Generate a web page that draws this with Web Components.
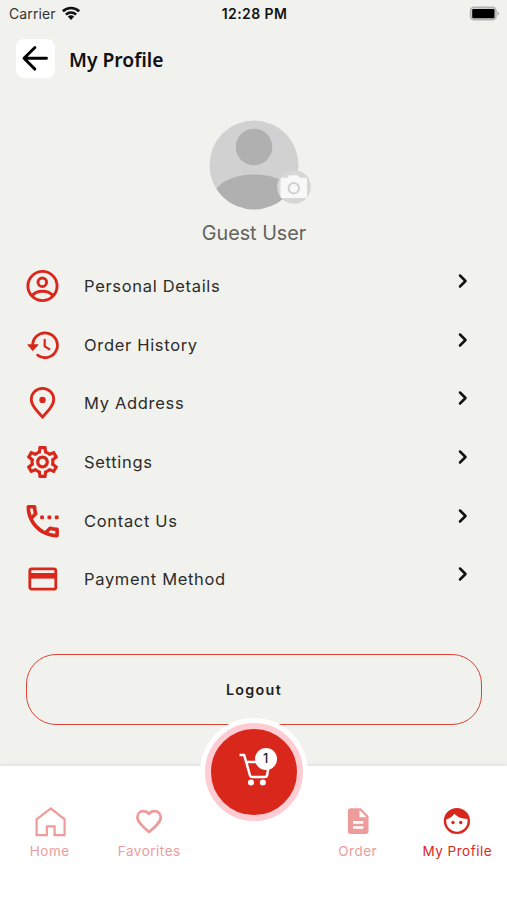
<!DOCTYPE html>
<html lang="en">
<head>
<meta charset="utf-8">
<title>My Profile</title>
<style>
  html, body { margin: 0; padding: 0; }
  body { background: #f1f2ed; font-family: Inter, "Liberation Sans", sans-serif; }
</style>
</head>
<body>
<profile-screen></profile-screen>

<script>
// Menu icons share one 40x40 box
const ICONS = {
  person: `<g fill="none" stroke="currentColor" stroke-width="2.9">
    <circle cx="20.5" cy="20" r="14.6"/><circle cx="20.3" cy="16.3" r="4.3"/>
    <path d="M9.6 30C15 23.6 26 23.6 31.4 30"/></g>`,
  history: `<g fill="none" stroke="currentColor" stroke-width="2.8" stroke-linecap="round" stroke-linejoin="round">
    <path d="M10.7 21.5A12.4 12.4 0 1 1 15.6 30.2"/><path d="M22.7 14.8V21.4L27.4 24.2" stroke-width="2.2"/></g>
    <path d="M5.8 19.8H16L10.8 25.6z" fill="currentColor" stroke="currentColor" stroke-linejoin="round"/>`,
  pin: `<path d="M20.5 34C14 27 9.3 21.8 9.3 16.5a11.2 11.2 0 0 1 22.4 0C31.7 21.8 27 27 20.5 34z" fill="none" stroke="currentColor" stroke-width="2.8"/>
    <circle cx="20.5" cy="16.9" r="3.2" fill="currentColor"/>`,
  gear: `<path transform="translate(1.3 .8) scale(1.6)" fill="currentColor" d="M19.43 12.98c.04-.32.07-.64.07-.98s-.03-.66-.07-.98l2.11-1.65c.19-.15.24-.42.12-.64l-2-3.46c-.09-.16-.26-.25-.44-.25-.06 0-.12.01-.17.03l-2.49 1c-.52-.4-1.08-.73-1.69-.98l-.38-2.65C14.46 2.18 14.25 2 14 2h-4c-.25 0-.46.18-.49.42l-.38 2.65c-.61.25-1.17.59-1.69.98l-2.49-1c-.06-.02-.12-.03-.18-.03-.17 0-.34.09-.43.25l-2 3.46c-.13.22-.07.49.12.64l2.11 1.65c-.04.32-.07.65-.07.98s.03.66.07.98l-2.11 1.65c-.19.15-.24.42-.12.64l2 3.46c.09.16.26.25.44.25.06 0 .12-.01.17-.03l2.49-1c.52.4 1.08.73 1.69.98l.38 2.65c.03.24.24.42.49.42h4c.25 0 .46-.18.49-.42l.38-2.65c.61-.25 1.17-.59 1.69-.98l2.49 1c.06.02.12.03.18.03.17 0 .34-.09.43-.25l2-3.46c.12-.22.07-.49-.12-.64l-2.11-1.65zm-1.98-1.71c.04.31.05.52.05.73 0 .21-.02.43-.05.73l-.14 1.13.89.7 1.08.84-.7 1.21-1.27-.51-1.04-.42-.9.68c-.43.32-.84.56-1.25.73l-1.06.43-.16 1.13-.2 1.35h-1.4l-.19-1.35-.16-1.13-1.06-.43c-.43-.18-.83-.41-1.23-.71l-.91-.7-1.06.43-1.27.51-.7-1.21 1.08-.84.89-.7-.14-1.13c-.03-.31-.05-.54-.05-.74s.02-.43.05-.73l.14-1.13-.89-.7-1.08-.84.7-1.21 1.27.51 1.04.42.9-.68c.43-.32.84-.56 1.25-.73l1.06-.43.16-1.13.2-1.35h1.39l.19 1.35.16 1.13 1.06.43c.43.18.83.41 1.23.71l.91.7 1.06-.43 1.27-.51.7 1.21-1.07.85-.89.7.14 1.13zM12 8c-2.21 0-4 1.79-4 4s1.79 4 4 4 4-1.79 4-4-1.79-4-4-4zm0 6c-1.1 0-2-.9-2-2s.9-2 2-2 2 .9 2 2-.9 2-2 2z"/>`,
  phone: `<path transform="translate(-.9 -1.4) scale(1.8)" fill="currentColor" d="M20 15.5c-1.2 0-2.5-.2-3.6-.6h-.3c-.3 0-.5.1-.7.3l-2.2 2.2c-2.8-1.5-5.2-3.8-6.6-6.6l2.2-2.2c.3-.3.4-.7.2-1-.3-1.1-.5-2.4-.5-3.6 0-.5-.5-1-1-1H4c-.5 0-1 .5-1 1 0 9.4 7.6 17 17 17 .5 0 1-.5 1-1v-3.5c0-.5-.5-1-1-1M5 5h1.5c.1.9.3 1.8.5 2.6L5.8 8.8C5.4 7.6 5.1 6.3 5 5m14 14c-1.3-.1-2.6-.4-3.8-.8l1.2-1.2c.8.2 1.7.4 2.6.4V19"/>
    <g fill="currentColor"><rect x="18.2" y="14.5" width="3.8" height="3.8" rx="1"/><rect x="25.5" y="14.5" width="3.8" height="3.8" rx="1"/><rect x="32.8" y="14.5" width="3.8" height="3.8" rx="1"/></g>`,
  card: `<rect x="7.8" y="9.8" width="26" height="20.4" rx="2" fill="none" stroke="currentColor" stroke-width="2.8"/>
    <path d="M7 14h27.5v5.6H7z" fill="currentColor"/>`,
  home: `<path d="M6.6 34.2V18.4L20.8 7.3L34.6 18.4V34.2H24.6V25.3H16.8V34.2z" fill="none" stroke="currentColor" stroke-width="2.2"/>`,
  heart: `<path d="M20 31C13 25 8.4 20.6 8.4 16.2C8.4 12.8 11 10.2 14.3 10.2C16.6 10.2 18.6 11.3 20 13C21.4 11.3 23.4 10.2 25.7 10.2C29 10.2 31.8 12.8 31.8 16.2C31.8 20.6 27 25 20 31z" fill="none" stroke="currentColor" stroke-width="2.7" stroke-linejoin="round"/>`,
  order: `<path transform="translate(4.7 4.6) scale(1.29)" fill="currentColor" d="M14 2H6c-1.1 0-1.99.9-1.99 2L4 20c0 1.1.89 2 1.99 2H18c1.1 0 2-.9 2-2V8l-6-6zm2 16H8v-2h8v2zm0-4H8v-2h8v2zm-3-5V3.5L18.5 9H13z"/>`,
  face: `<circle cx="19.9" cy="20" r="11.9" fill="none" stroke="currentColor" stroke-width="2.4"/>
    <path d="M8 18.8C8 11.5 13.5 8 19.9 8C27 8 31.5 12.5 31.5 18C25 18.3 20.3 15.8 17.3 12.8C15.5 15.8 12.5 17.9 8 18.8z" fill="currentColor"/>
    <circle cx="16" cy="21.5" r="1.7" fill="currentColor"/><circle cx="23.7" cy="21.5" r="1.7" fill="currentColor"/>`
};

const icon = (name) => `<svg width="40" height="40" viewBox="0 0 40 40" aria-hidden="true">${ICONS[name] || ''}</svg>`;

class StatusBar extends HTMLElement {
  constructor() {
    super();
    this.attachShadow({ mode: 'open' }).innerHTML = `
      <style>
        :host {
          display: grid;
          grid-template-columns: 1fr auto 1fr;
          align-items: center;
          height: 27px;
          padding: 0 7px 0 9px;
          color: #111;
          font-size: 14px;
        }
        .left { display: flex; align-items: center; gap: 6px; color: #333; letter-spacing: .1px; }
        .time { font-weight: 600; letter-spacing: .4px; }
        .battery { justify-self: end; }
        svg { display: block; }
      </style>
      <div class="left"><span>Carrier</span>
        <svg width="18" height="15" viewBox="0 0 18 15">
          <g fill="none" stroke="#111" stroke-width="2.6">
            <path d="M.9 5.3C5.4 .8 12.6 .8 17.1 5.3"/><path d="M3.9 8.6C6.7 5.8 11.3 5.8 14.1 8.6"/>
          </g>
          <path d="M5.8 10.5Q9 7.9 12.2 10.5L9 14z" fill="#111"/>
        </svg>
      </div>
      <span class="time"><slot></slot></span>
      <svg class="battery" width="31" height="16" viewBox="0 0 31 16">
        <rect x="1.5" y="1.2" width="25.5" height="12.6" rx="3.5" fill="#d0d1cd" stroke="#b2b3af" stroke-width="1.5"/>
        <rect x="3.2" y="2.9" width="22.3" height="9.4" rx="1.3" fill="#000"/>
        <path d="M28.5 5.3Q31.5 7.5 28.5 9.8z" fill="#aaaba7"/>
      </svg>`;
  }
}
customElements.define('status-bar', StatusBar);

class PageHeader extends HTMLElement {
  constructor() {
    super();
    this.attachShadow({ mode: 'open' }).innerHTML = `
      <style>
        :host { display: flex; align-items: center; gap: 14px; padding: 12px 16px 0; }
        button { display: block; width: 39px; height: 39px; padding: 0; border: 0; border-radius: 8px; background: #fff; }
        svg { display: block; }
        h1 { margin: 2px 0 0; font: 600 19.3px/28px "Noto Sans", sans-serif; color: #111; }
      </style>
      <button aria-label="Back">
        <svg width="39" height="39" viewBox="0 0 39 39" fill="none" stroke="#000" stroke-width="2.9" stroke-linecap="round" stroke-linejoin="round">
          <path d="M30.5 19.3H8.3M18.9 8.5L8 19.3L18.9 30.1"/>
        </svg>
      </button>
      <h1><slot></slot></h1>`;
  }
}
customElements.define('page-header', PageHeader);

class UserAvatar extends HTMLElement {
  constructor() {
    super();
    this.attachShadow({ mode: 'open' }).innerHTML = `
      <style>
        :host { display: flex; flex-direction: column; align-items: center; padding-top: 42px; }
        .photo { position: relative; width: 90px; height: 90px; }
        svg { display: block; }
        .camera { position: absolute; left: 68.5px; top: 50px; }
        .name { margin: 9px 0 0 1px; font-size: 19.8px; line-height: 28px; color: #62625f; }
      </style>
      <div class="photo">
        <svg width="90" height="90" viewBox="0 0 90 90">
          <clipPath id="round"><circle cx="45" cy="45" r="44.5"/></clipPath>
          <g clip-path="url(#round)">
            <rect width="90" height="90" fill="#d1d1d1"/>
            <circle cx="45" cy="27" r="18.3" fill="#b0b0b0"/>
            <path d="M6 71C18 49 72 49 84 71L80 90H10z" fill="#b0b0b0"/>
          </g>
        </svg>
        <svg class="camera" width="35" height="35" viewBox="0 0 35 35">
          <circle cx="17" cy="17" r="16.8" fill="#d7d7d5"/>
          <path d="M5 7.8H10.5L12 5.3H21L22.5 7.8H28.5Q30 7.8 30 9.3V26.5Q30 28 28.5 28H5Q3.5 28 3.500 26.5V9.3Q3.5 7.8 5 7.8z" fill="#f8f8f8"/>
          <circle cx="16.8" cy="18.2" r="5.2" fill="none" stroke="#d0d0d0" stroke-width="2"/>
        </svg>
      </div>
      <div class="name"><slot></slot></div>`;
  }
}
customElements.define('user-avatar', UserAvatar);

class MenuRow extends HTMLElement {
  connectedCallback() {
    this.attachShadow({ mode: 'open' }).innerHTML = `
      <style>
        :host { display: flex; align-items: center; height: 58.6px; padding: 0 36px 0 22px; color: #2c2c2a; }
        svg { display: block; flex: none; color: #d9271c; }
        .label { flex: 1; margin-left: 22px; font-size: 16.5px; letter-spacing: .68px; }
        svg.chevron { margin-bottom: 10px; color: #111; }
      </style>
      ${icon(this.getAttribute('icon'))}
      <span class="label"><slot></slot></span>
      <svg class="chevron" width="16" height="16" viewBox="0 0 16 16" fill="none" stroke="currentColor" stroke-width="2.5" stroke-linecap="round" stroke-linejoin="round"><path d="M5 2.5L10.5 8L5 13.5"/></svg>`;
  }
}
customElements.define('menu-row', MenuRow);

class LogoutButton extends HTMLElement {
  constructor() {
    super();
    this.attachShadow({ mode: 'open' }).innerHTML = `
      <style>
        :host { display: block; padding: 0 25px 0 26px; }
        button {
          display: block;
          box-sizing: border-box;
          width: 100%;
          height: 71px;
          border: 1px solid #d9453b;
          border-radius: 30px;
          background: none;
          color: #222;
          font: 600 14.3px Inter, sans-serif;
          letter-spacing: 1.3px;
        }
      </style>
      <button><slot></slot></button>`;
  }
}
customElements.define('logout-button', LogoutButton);

class NavItem extends HTMLElement {
  connectedCallback() {
    this.attachShadow({ mode: 'open' }).innerHTML = `
      <style>
        :host { display: flex; flex-direction: column; align-items: center; color: #ee9c9b; }
        :host([active]) { color: #d9271c; }
        svg { display: block; }
        span { margin-top: 1px; font-size: 13.5px; line-height: 18px; letter-spacing: .5px; white-space: nowrap; }
      </style>
      ${icon(this.getAttribute('icon'))}
      <span><slot></slot></span>`;
  }
}
customElements.define('nav-item', NavItem);

class CartButton extends HTMLElement {
  connectedCallback() {
    this.attachShadow({ mode: 'open' }).innerHTML = `
      <style>
        :host { display: block; }
        .ring {
          position: relative;
          box-sizing: border-box;
          width: 98px;
          height: 98px;
          border: 6px solid #fdcdd3;
          border-radius: 50%;
          background: #d9271c;
          box-shadow: 0 0 0 5px #fff;
        }
        svg { display: block; }
        .badge {
          position: absolute;
          left: 44px;
          top: 19px;
          width: 22px;
          height: 22px;
          border-radius: 50%;
          background: #fff;
          color: #222;
          font-size: 12.5px;
          font-weight: 500;
          line-height: 22px;
          text-align: center;
        }
      </style>
      <div class="ring">
        <svg width="86" height="86" viewBox="0 0 86 86">
          <path d="M28.5 26H33.2L39 46.5Q39.4 48 41 48H54Q55.5 48 56 46.5L58.5 33H35.5" fill="none" stroke="#fff" stroke-width="2.5" stroke-linejoin="round"/>
          <circle cx="40" cy="53.5" r="3" fill="#fff"/><circle cx="51.8" cy="53.5" r="3" fill="#fff"/>
        </svg>
        <span class="badge">${this.getAttribute('count')}</span>
      </div>`;
  }
}
customElements.define('cart-button', CartButton);

class BottomNav extends HTMLElement {
  constructor() {
    super();
    this.attachShadow({ mode: 'open' }).innerHTML = `
      <style>
        :host {
          position: relative;
          display: grid;
          grid-template-columns: 1fr 1fr 109px 1fr 1fr;
          box-sizing: border-box;
          height: 134px;
          padding-top: 35px;
          background: #fff;
          box-shadow: 0 -1px 4px rgba(0, 0, 0, .08);
        }
        /* the cart overlaps the bar's top edge */
        ::slotted(cart-button) { position: absolute; left: 204.5px; top: -43.5px; }
        ::slotted(nav-item:nth-of-type(3)) { grid-column: 4; }
      </style>
      <slot></slot>`;
  }
}
customElements.define('bottom-nav', BottomNav);

class ProfileScreen extends HTMLElement {
  constructor() {
    super();
    this.attachShadow({ mode: 'open' }).innerHTML = `
      <style>
        :host { display: flex; flex-direction: column; width: 507px; height: 900px; overflow: hidden; background: #f1f2ed; }
        .menu { display: block; margin-top: 10px; }
        logout-button { margin-top: 45px; }
        bottom-nav { margin-top: auto; }
      </style>
      <status-bar>12:28 PM</status-bar>
      <page-header>My Profile</page-header>
      <user-avatar>Guest User</user-avatar>
      <nav class="menu">
        <menu-row icon="person">Personal Details</menu-row>
        <menu-row icon="history">Order History</menu-row>
        <menu-row icon="pin">My Address</menu-row>
        <menu-row icon="gear">Settings</menu-row>
        <menu-row icon="phone">Contact Us</menu-row>
        <menu-row icon="card">Payment Method</menu-row>
      </nav>
      <logout-button>Logout</logout-button>
      <bottom-nav>
        <nav-item icon="home">Home</nav-item>
        <nav-item icon="heart">Favorites</nav-item>
        <nav-item icon="order">Order</nav-item>
        <nav-item icon="face" active>My Profile</nav-item>
        <cart-button count="1"></cart-button>
      </bottom-nav>`;
  }
}
customElements.define('profile-screen', ProfileScreen);
</script>
</body>
</html>
